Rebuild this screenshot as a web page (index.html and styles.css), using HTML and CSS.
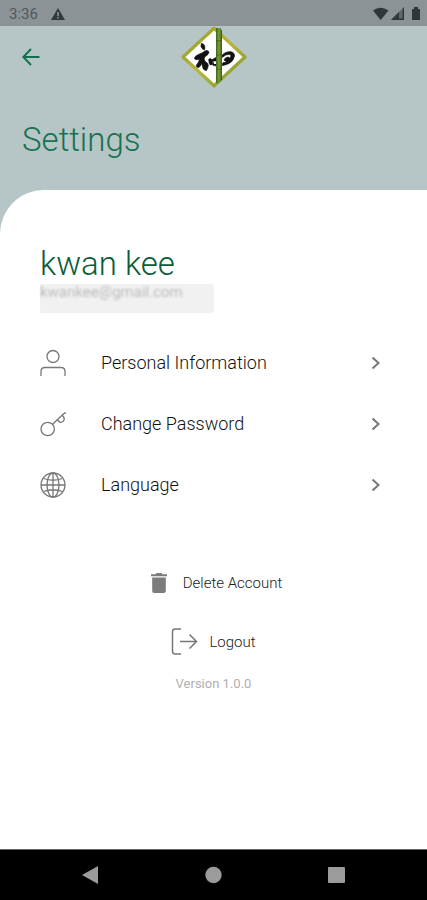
FILE: index.html
```html
<!DOCTYPE html>
<html lang="en">
<head>
<meta charset="utf-8">
<meta name="viewport" content="width=device-width, initial-scale=1">
<title>Settings</title>
<link rel="stylesheet" href="styles.css">
</head>
<body>
<div class="status">
  <div class="status-group">
    <span>3:36</span>
    <svg width="14" height="12" viewBox="0 0 14 12"><path d="M7 0 14 12H0Z" fill="#33393b"/><path d="M6.2 4h1.6v4H6.2zM6.2 9h1.6v1.500H6.200z" fill="#8b9397"/></svg>
  </div>
  <svg width="48" height="14" viewBox="0 0 48 14" fill="#30373a">
    <path d="M0 3.500Q7.500-2 15.500 3.500L7.700 13Z"/>
    <path d="M18 13 31 0V13Z" opacity=".45"/>
    <path d="M18 13 26 5V13Z"/><path d="M29.500 2 31 0V13H26V11.500h3.500z"/>
    <path d="M39 2h2V0h4v2h2v11h-8z"/>
  </svg>
</div>
<header class="header">
  <div class="topbar">
    <button class="back" aria-label="Back">
      <svg width="18" height="18" viewBox="0 0 18 18" fill="none" stroke="#12714c" stroke-width="1.900"><path d="M17.500 9H1.500M9 1 1.300 9 9 17"/></svg>
    </button>
    <svg class="logo" width="68" height="62" viewBox="30 18 204 186">
      <defs>
        <linearGradient id="gold" x1="0" y1="0" x2="1" y2="1"><stop offset="0" stop-color="#8f9a2b"/><stop offset=".5" stop-color="#b9b73a"/><stop offset="1" stop-color="#7d9430"/></linearGradient>
        <linearGradient id="stem"><stop offset="0" stop-color="#3c6514"/><stop offset=".5" stop-color="#7da03c"/><stop offset="1" stop-color="#35570f"/></linearGradient>
      </defs>
      <path d="M132 25 225 111 132 197 39 111Z" fill="#fff" stroke="url(#gold)" stroke-width="10" stroke-linejoin="round"/>
      <g fill="#111" stroke="#111" stroke-width="2">
        <path d="M94 70q8 1 10 8t-1 12q-8-3-10-11z"/>
        <path d="M74 117q-2-8 10-13 14-5 22-12 10-2 11 5-2 8-13 14-4 8 1 13 9 5 10 12-1 9-6 16-10-2-11-10l-2-12q-5 11-11 13-7-1-6-7 8-10 10-19-9 5-15 0z"/>
        <path d="M116 118q7-6 10 2l1 13q-6 5-9-2zM126 119q12-9 22-8l5 9q-2 15-14 18l-10-2q-4-4 0-8z"/>
        <path d="M155 107q10-13 28-12 13 4 10 15-3 14-17 21l-18 6q-4-5 1-9 8 0 13-5-6 2-10-3 3-8 12-9 5 1 6 4 6-10-3-12-10 0-20 9z"/>
      </g>
      <path d="M130 124h8v8h-6z" fill="#fff"/>
      <path d="M138 24h13l5 8V180l-13 12-5-5Z" fill="url(#stem)"/>
      <path d="M138 62h18M138 105h18M138 148h18" stroke="#36591a" stroke-width="2"/>
    </svg>
  </div>
  <h1>Settings</h1>
</header>
<main class="sheet">
  <h2>kwan kee</h2>
  <div class="email"><span>kwankee@gmail.com</span></div>
  <nav class="menu">
    <a href="#personal">
      <svg width="26" height="28" viewBox="0 0 26 28" class="line"><circle cx="13" cy="7.500" r="6"/><path d="M1 27v-4.500Q1 18.500 5 18.500H21Q25 18.500 25 22.500V27"/></svg>
      <span>Personal Information</span>
      <svg class="chevron" width="9" height="14" viewBox="0 0 9 14"><path d="m1.500 1.500 6 5.500-6 5.500"/></svg>
    </a>
    <a href="#password">
      <svg width="26" height="26" viewBox="0 0 26 26" class="line"><circle cx="7.700" cy="18" r="6.700"/><path d="M12.500 13.300 25 1.500M25 1v2M17.500 8.700l2.500 2.600q3 .500 4-2.300 1-2-1.500-4.500"/></svg>
      <span>Change Password</span>
      <svg class="chevron" width="9" height="14" viewBox="0 0 9 14"><path d="m1.500 1.500 6 5.500-6 5.500"/></svg>
    </a>
    <a href="#language">
      <svg width="26" height="26" viewBox="0 0 26 26" class="line"><circle cx="13" cy="13" r="12"/><ellipse cx="13" cy="13" rx="6" ry="12"/><path d="M13 1v24M1 13h24M3.500 6.500Q13 10 22.500 6.500M3.500 19.500Q13 16 22.500 19.500"/></svg>
      <span>Language</span>
      <svg class="chevron" width="9" height="14" viewBox="0 0 9 14"><path d="m1.500 1.500 6 5.500-6 5.500"/></svg>
    </a>
  </nav>
  <div class="actions">
    <button class="delete">
      <svg width="16" height="20" viewBox="0 0 16 20" fill="#7c7c7c"><path d="M0 1.200h4.500L5.500 0h5l1 1.200H16v2H0zM1.200 4.500h13.600V18q0 2-2 2H3.200q-2 0-2-2z"/></svg>
      Delete Account
    </button>
    <button class="logout">
      <svg width="27" height="27" viewBox="0 0 27 27" class="line"><path d="M10 1H4Q1.500 1 1.500 4V23Q1.500 26 4 26h6M9 13.500h16.500M18.500 6.500l7 7-7 7" stroke-width="1.500"/></svg>
      Logout
    </button>
  </div>
  <p class="version">Version 1.0.0</p>
</main>
<footer class="navbar">
  <button aria-label="Back"><svg width="17" height="18" viewBox="0 0 17 18"><path d="M0 9 16 0V18Z"/></svg></button>
  <button aria-label="Home"><svg width="17" height="18" viewBox="0 0 17 18"><circle cx="8.500" cy="9" r="8.200"/></svg></button>
  <button aria-label="Recent apps"><svg width="17" height="18" viewBox="0 0 17 18"><rect y="1" width="17" height="16" rx="1"/></svg></button>
</footer>
</body>
</html>
```
FILE: styles.css
```css
* { box-sizing: border-box; }

body {
  margin: 0;
  min-height: 100vh;
  display: flex;
  flex-direction: column;
  background: #b6c5c6;
  font-family: Roboto, "Liberation Sans", sans-serif;
  color: #222;
}

svg { display: block; flex: none; }

button {
  padding: 0;
  border: 0;
  background: none;
  font: inherit;
  color: inherit;
}

h1, h2, p { margin: 0; }

.status {
  display: flex;
  align-items: center;
  justify-content: space-between;
  height: 26px;
  padding: 2px 6px 0 9px;
  background: #8b9397;
  color: #50585b;
  font-size: 15px;
}

.status-group {
  display: flex;
  align-items: center;
  gap: 13px;
}

.header { height: 164px; }

.topbar {
  display: grid;
  grid-template-columns: 1fr auto 1fr;
  align-items: center;
  padding: 0 22px;
}

.back { justify-self: start; }

h1 {
  padding: 32px 22px 0;
  font-size: 33px;
  line-height: 40px;
  font-weight: 300;
  color: #17724f;
}

.sheet {
  flex: 1;
  padding: 54px 40px 24px;
  border-radius: 44px 0 0 0;
  background: #fff;
}

h2 {
  font-size: 33px;
  line-height: 40px;
  font-weight: 350;
  color: #0d5c38;
}

.email {
  width: 174px;
  height: 29px;
  border-radius: 2px;
  background: #f1f1f1;
  font-size: 15px;
  line-height: 16px;
  color: #bbb;
}

.email span {
  display: block;
  filter: blur(1px);
}

.menu { margin-top: 19px; }

.menu a {
  display: flex;
  align-items: center;
  height: 61px;
  padding-right: 7px;
  font-size: 18px;
  font-weight: 300;
  color: #111;
  text-decoration: none;
}

.menu span {
  flex: 1;
  margin-left: 35px;
}

.line {
  fill: none;
  stroke: #777;
  stroke-width: 1.3px;
}

.chevron {
  fill: none;
  stroke: #777;
  stroke-width: 2px;
}

.actions {
  display: flex;
  flex-direction: column;
  align-items: center;
  margin-top: 38px;
  font-size: 15px;
  font-weight: 350;
}

.actions button {
  display: flex;
  align-items: center;
  height: 59px;
}

.delete { gap: 16px; margin-left: 6px; }

.logout { gap: 11px; }

.version {
  margin-top: 5px;
  text-align: center;
  font-size: 13px;
  line-height: 16px;
  color: #b0b0b0;
}

.navbar {
  display: grid;
  grid-template-columns: repeat(3, 1fr);
  align-items: center;
  height: 51px;
  padding: 0 29px;
  border-top: 1px solid #666;
  background: #000;
}

.navbar button { justify-self: center; }

.navbar svg { fill: #9b9b9b; }
```
